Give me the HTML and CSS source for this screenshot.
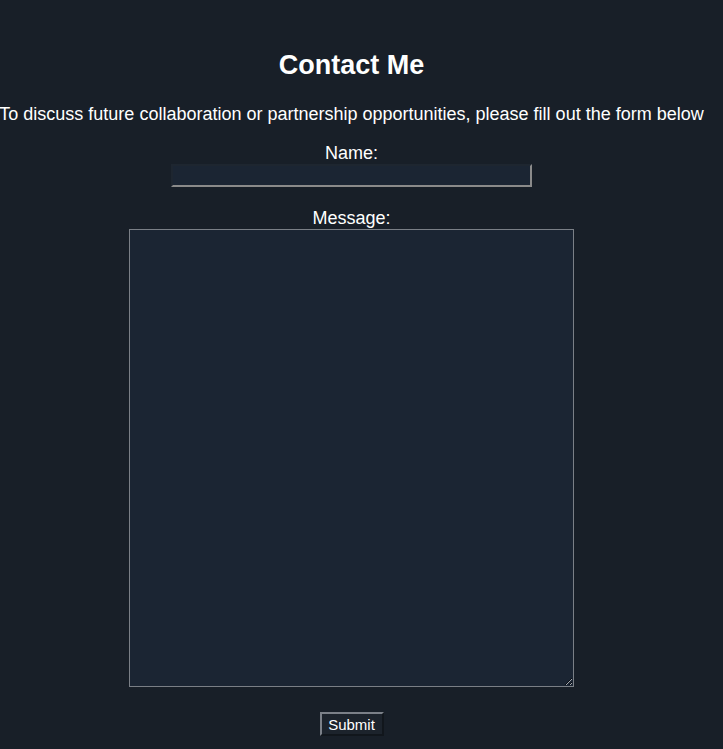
FILE: index.html
```html
<!DOCTYPE html>
<html lang="en">
<head>
<meta charset="utf-8">
<title>Contact Me</title>
<link rel="stylesheet" href="styles.css">
</head>
<body>
<main class="page">
  <h1 class="title">Contact Me</h1>
  <p class="intro">To discuss future collaboration or partnership opportunities, please fill out the form below</p>
  <form class="form">
    <label class="label" for="name">Name:</label>
    <input class="name-input" id="name" type="text">
    <label class="label label-message" for="message">Message:</label>
    <textarea class="message-input" id="message"></textarea>
    <button class="submit" type="button">Submit</button>
  </form>
</main>
</body>
</html>
```

FILE: styles.css
```css
html, body {
  margin: 0;
  padding: 0;
  background: #181f28;
}
body {
  font-family: "Liberation Sans", Arial, sans-serif;
  color: #ffffff;
  min-height: 749px;
}
.page {
  width: 703px;
  display: flex;
  flex-direction: column;
  align-items: center;
  text-align: center;
}
.title {
  margin: 50px 0 0;
  font-size: 27px;
  line-height: 31px;
  font-weight: bold;
}
.intro {
  margin: 23px 0 0;
  font-size: 18px;
  line-height: 21px;
  white-space: nowrap;
}
.form {
  margin-top: 18px;
  display: flex;
  flex-direction: column;
  align-items: center;
}
.label {
  display: block;
  font-size: 18px;
  line-height: 21px;
}
.label-message {
  margin-top: 21px;
}
.name-input {
  box-sizing: border-box;
  width: 361px;
  height: 23px;
  margin: 0;
  padding: 0 4px;
  background: #1b2533;
  color: #fff;
  border: 2px solid;
  border-top-color: #1e2630;
  border-left-color: #1e2630;
  border-bottom-color: #8a8a8a;
  border-right-color: #8a8a8a;
  outline: none;
}
.message-input {
  display: block;
  box-sizing: border-box;
  width: 445px;
  height: 458px;
  margin: 0;
  padding: 2px;
  background: #1b2533;
  color: #fff;
  border: 1px solid #7a7f86;
  resize: both;
  outline: none;
}
.submit {
  box-sizing: border-box;
  margin-top: 25px;
  width: 64px;
  height: 24px;
  padding: 0;
  font-family: "Liberation Sans", Arial, sans-serif;
  font-size: 15px;
  color: #fff;
  background: #1c232c;
  border: 2px solid;
  border-top-color: #7b8088;
  border-left-color: #7b8088;
  border-bottom-color: #11161c;
  border-right-color: #11161c;
}
```
